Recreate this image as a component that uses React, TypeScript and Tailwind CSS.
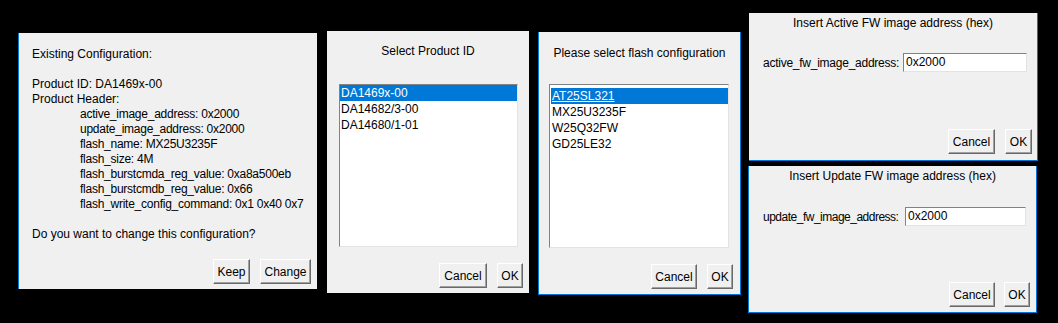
const font = "font-['Liberation_Sans',Arial,sans-serif]";

function TkButton({ label, width }: { label: string; width: string }) {
  return (
    <div
      className={`${width} h-[25px] flex items-center justify-center bg-[#f0f0f0] border border-t-white border-l-white border-r-[#696969] border-b-[#696969] shadow-[inset_-1px_-1px_0_#a0a0a0] text-[12px] text-black`}
    >
      {label}
    </div>
  );
}

function ListBox({
  items,
  width,
  height,
  padTop,
  underline,
}: {
  items: string[];
  width: string;
  height: string;
  padTop: string;
  underline?: boolean;
}) {
  return (
    <div
      className={`${width} ${height} ${padTop} bg-white border border-t-[#828282] border-l-[#828282] border-r-[#e3e3e3] border-b-[#e3e3e3]`}
    >
      {items.map((item, i) => (
        <div
          key={item}
          className={`h-[16px] leading-[16px] pl-[1px] text-[12px] ${
            i === 0 ? "bg-[#0078d7] text-white" : "text-black"
          } ${i === 0 && underline ? "underline" : ""}`}
        >
          {item}
        </div>
      ))}
    </div>
  );
}

const headerLines = [
  "active_image_address: 0x2000",
  "update_image_address: 0x2000",
  "flash_name: MX25U3235F",
  "flash_size: 4M",
  "flash_burstcmda_reg_value: 0xa8a500eb",
  "flash_burstcmdb_reg_value: 0x66",
  "flash_write_config_command: 0x1 0x40 0x7",
];

export default function App() {
  return (
    <div className={`w-[1058px] h-[323px] bg-black flex items-start pl-[18px] ${font} text-[12px] text-black`}>
      {/* existing configuration */}
      <div className="mt-[33px] w-[299px] h-[256px] bg-[#f0f0f0] border-l border-l-[#0078d7] flex flex-col">
        <div className="pt-[14px] pl-[13px] leading-[15px]">
          <div>Existing Configuration:</div>
          <div className="h-[15px]" />
          <div>Product ID: DA1469x-00</div>
          <div>Product Header:</div>
          {headerLines.map((l) => (
            <div key={l} className="pl-[48px] tracking-[-0.25px]">
              {l}
            </div>
          ))}
          <div className="h-[15px]" />
          <div>Do you want to change this configuration?</div>
        </div>
        <div className="mt-auto flex justify-end gap-[10px] pr-[6px] pb-[5px]">
          <TkButton label="Keep" width="w-[37px]" />
          <TkButton label="Change" width="w-[51px]" />
        </div>
      </div>

      {/* product id */}
      <div className="mt-[31px] ml-[10px] w-[202px] h-[262px] bg-[#f0f0f0] flex flex-col">
        <div className="pt-[13px] leading-[15px] text-center">Select Product ID</div>
        <div className="mt-[25px] ml-[12px]">
          <ListBox
            items={["DA1469x-00", "DA14682/3-00", "DA14680/1-01"]}
            width="w-[179px]"
            height="h-[163px]"
            padTop="pt-0"
          />
        </div>
        <div className="mt-auto flex justify-end gap-[10px] pr-[6px] pb-[5px]">
          <TkButton label="Cancel" width="w-[48px]" />
          <TkButton label="OK" width="w-[26px]" />
        </div>
      </div>

      {/* flash configuration */}
      <div className="mt-[32px] ml-[9px] w-[203px] h-[263px] bg-[#f0f0f0] border-l border-r border-b border-[#0078d7] flex flex-col">
        <div className="pt-[14px] leading-[15px] text-center">Please select flash configuration</div>
        <div className="mt-[23px] ml-[10px]">
          <ListBox
            items={["AT25SL321", "MX25U3235F", "W25Q32FW", "GD25LE32"]}
            width="w-[180px]"
            height="h-[164px]"
            padTop="pt-[3px] pl-[1px]"
            underline
          />
        </div>
        <div className="mt-auto flex justify-end gap-[10px] pr-[7px] pb-[5px]">
          <TkButton label="Cancel" width="w-[46px]" />
          <TkButton label="OK" width="w-[26px]" />
        </div>
      </div>

      {/* address dialogs */}
      <div className="ml-[7px] flex flex-col">
        <div className="mt-[13px] ml-[1px] w-[289px] h-[148px] bg-[#f0f0f0] border-r border-b border-[#0078d7] flex flex-col">
          <div className="pt-[3px] leading-[15px] text-center">Insert Active FW image address (hex)</div>
          <div className="mt-[22px] pl-[14px] pr-[10px] h-[19px] flex items-center">
            <span className="tracking-[-0.25px]">active_fw_image_address:</span>
            <div className="ml-auto w-[124px] h-[19px] bg-white border border-t-[#828282] border-l-[#828282] border-r-[#e3e3e3] border-b-[#e3e3e3] pl-[2px] leading-[17px]">
              0x2000
            </div>
          </div>
          <div className="mt-auto flex justify-end gap-[10px] pr-[5px] pb-[6px]">
            <TkButton label="Cancel" width="w-[47px]" />
            <TkButton label="OK" width="w-[27px]" />
          </div>
        </div>

        <div className="mt-[5px] w-[289px] h-[147px] bg-[#f0f0f0] border-l border-r border-b border-[#0078d7] flex flex-col">
          <div className="pt-[3px] leading-[15px] text-center">Insert Update FW image address (hex)</div>
          <div className="mt-[23px] pl-[14px] pr-[10px] h-[19px] flex items-center">
            <span className="tracking-[-0.5px]">update_fw_image_address:</span>
            <div className="ml-auto w-[121px] h-[19px] bg-white border border-t-[#828282] border-l-[#828282] border-r-[#e3e3e3] border-b-[#e3e3e3] pl-[2px] leading-[17px]">
              0x2000
            </div>
          </div>
          <div className="mt-auto flex justify-end gap-[9px] pr-[6px] pb-[5px]">
            <TkButton label="Cancel" width="w-[46px]" />
            <TkButton label="OK" width="w-[26px]" />
          </div>
        </div>
      </div>
    </div>
  );
}
